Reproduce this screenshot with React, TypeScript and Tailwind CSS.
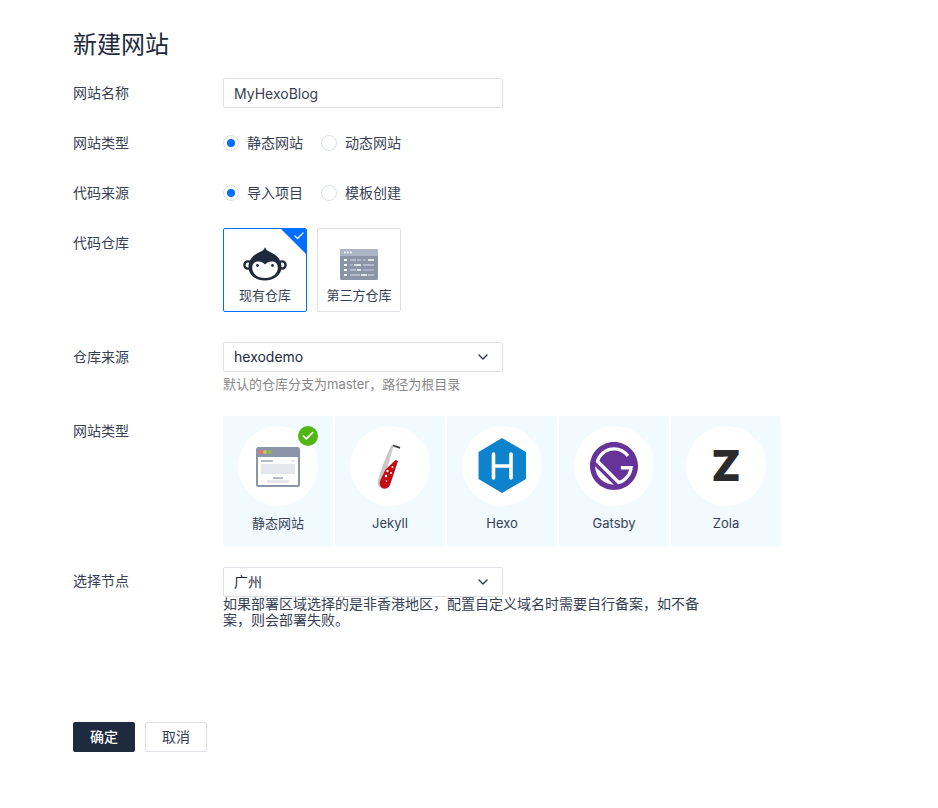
import { ChevronDown, Check } from "lucide-react";
import type { ReactNode } from "react";

function Row({ label, children, className = "", labelClass = "leading-[30px]" }: { label: string; children: ReactNode; className?: string; labelClass?: string }) {
  return (
    <div className={`flex ${className}`}>
      <div className={`w-[150px] shrink-0 text-[14px] text-[#364154] ${labelClass}`}>{label}</div>
      <div className="min-w-0 flex-1">{children}</div>
    </div>
  );
}

function Radio({ text, on }: { text: string; on?: boolean }) {
  return (
    <div className="mr-[18px] flex items-center">
      <span className="flex h-4 w-4 items-center justify-center rounded-full border border-[#d9dee8] bg-white">
        {on && <span className="h-2 w-2 rounded-full bg-[#006eff]" />}
      </span>
      <span className="ml-2 pb-[2px] text-[14px] text-[#364154]">{text}</span>
    </div>
  );
}

function Select({ value }: { value: string }) {
  return (
    <div className="flex h-[30px] w-[280px] items-center justify-between rounded-[2px] border border-[#dde0e8] pl-[10px] pr-[11px] text-[14px] text-[#1e2a3c]">
      <span className="pb-[2px]">{value}</span>
      <ChevronDown size={16} strokeWidth={2} className="text-[#2b3648]" />
    </div>
  );
}

function Monkey() {
  return (
    <svg width="44" height="34" viewBox="0 0 44 34">
      <circle cx="5" cy="18" r="3.6" fill="#fff" stroke="#1e2a3c" strokeWidth="2.4" />
      <circle cx="39" cy="18" r="3.6" fill="#fff" stroke="#1e2a3c" strokeWidth="2.4" />
      <path d="M22 0 C23 4 26 4 30 6.5 C35.5 9.5 38.5 14.5 38.5 20 C38.5 28 31 33.5 22 33.5 C13 33.5 5.5 28 5.5 20 C5.5 14.5 8.5 9.5 14 6.5 C18 4 21 4 22 0 Z" fill="#1e2a3c" />
      <path d="M22 17.5 C24 15 27 14 30 14.5 C34 15 35.5 19 34.5 23 C33 28.5 27.5 31 22 31 C16.5 31 11 28.5 9.5 23 C8.5 19 10 15 14 14.5 C17 14 20 15 22 17.5 Z" fill="#fff" />
      <circle cx="14.5" cy="18.5" r="1.4" fill="#1e2a3c" />
      <circle cx="29.5" cy="18.5" r="1.4" fill="#1e2a3c" />
    </svg>
  );
}

function Repo() {
  return (
    <svg width="38" height="31" viewBox="0 0 38 31">
      <rect width="38" height="31" rx="1.5" fill="#8b95a8" />
      <path d="M0 7V1.5A1.5 1.5 0 0 1 1.5 0h35A1.5 1.5 0 0 1 38 1.5V7Z" fill="#aab4c5" />
      <rect x="4" y="2.5" width="1.8" height="1.8" fill="#fff" />
      <rect x="7" y="2.5" width="1.8" height="1.8" fill="#fff" />
      <rect x="10" y="2.5" width="1.8" height="1.8" fill="#fff" />
      <rect x="4" y="10" width="3" height="2" fill="#fff" />
      <rect x="4" y="15" width="3" height="2" fill="#fff" />
      <rect x="4" y="20" width="3" height="2" fill="#fff" />
      <rect x="4" y="25" width="3" height="2" fill="#fff" />
      <rect x="10" y="10" width="6" height="2" fill="#b4bccb" />
      <rect x="17" y="10" width="4" height="2" fill="#b4bccb" />
      <rect x="23" y="10" width="3" height="2" fill="#a6afc0" />
      <rect x="28" y="10" width="6" height="2" fill="#dfe3ea" />
      <rect x="10" y="15" width="3" height="2" fill="#a6afc0" />
      <rect x="14" y="15" width="7" height="2" fill="#dfe3ea" />
      <rect x="23" y="15" width="11" height="2" fill="#b4bccb" />
      <rect x="10" y="20" width="6" height="2" fill="#b4bccb" />
      <rect x="17" y="20" width="4" height="2" fill="#dfe3ea" />
      <rect x="23" y="20" width="11" height="2" fill="#a6afc0" />
      <rect x="10" y="25" width="10" height="2" fill="#b4bccb" />
      <rect x="21" y="25" width="6" height="2" fill="#dfe3ea" />
      <rect x="28" y="25" width="6" height="2" fill="#b4bccb" />
    </svg>
  );
}

function StaticIcon() {
  return (
    <svg width="80" height="80" viewBox="0 0 80 80">
      <rect x="18" y="21" width="44" height="40" rx="2.5" fill="#8b95a8" />
      <rect x="20" y="31" width="40" height="28" fill="#fff" />
      <circle cx="22" cy="26" r="2" fill="#f8696b" />
      <circle cx="27" cy="26" r="2" fill="#e9b63f" />
      <circle cx="32" cy="26" r="2" fill="#7fc241" />
      <rect x="23" y="34" width="12" height="2" fill="#b2bccb" />
      <rect x="53" y="34" width="4" height="2" fill="#e5e8ec" />
      <rect x="23" y="38" width="34" height="10" fill="#e5e8ec" />
      <rect x="35" y="51" width="10" height="2" fill="#b2bccb" />
      <rect x="29" y="54" width="22" height="3" fill="#e5e8ec" />
    </svg>
  );
}

function JekyllIcon() {
  return (
    <svg width="80" height="80" viewBox="0 0 80 80">
      <path d="M41.5 19 L43.5 20 L33 58 C32.5 60.5 33 61.5 34.5 62.8 C31 63.5 27 60 27.8 55 C31 43 36 30 41.5 19 Z" fill="#c9c9c9" />
      <path d="M45.5 34 L48 35 L40 59 C38 63 34 63.5 31.5 61.5 C29.8 60 29.3 57.5 30 55 L35.5 43.5 Z" fill="#c40d14" />
      <circle cx="42.5" cy="41" r="1" fill="#fff" />
      <circle cx="37.5" cy="45" r="1.2" fill="#fff" />
      <circle cx="41" cy="47" r="1" fill="#fff" />
      <circle cx="36" cy="50" r="1.2" fill="#fff" />
      <circle cx="36.5" cy="55" r="0.8" fill="#fff" />
      <line x1="43" y1="19.5" x2="50" y2="21.8" stroke="#333" strokeWidth="1.8" />
    </svg>
  );
}

function HexoIcon() {
  return (
    <svg width="80" height="80" viewBox="0 0 80 80">
      <polygon points="40,12 64,26 64,53 40,67 16.5,53 16.5,26" fill="#0e83cd" />
      <path d="M31.5 28V52M49 28V52M31.5 40H49" stroke="#fff" strokeWidth="3.6" strokeLinecap="round" fill="none" />
    </svg>
  );
}

function GatsbyIcon() {
  return (
    <svg width="48" height="48" viewBox="0 0 28 28">
      <path
        fill="#663399"
        d="M14 0C6.3 0 0 6.3 0 14s6.3 14 14 14 14-6.3 14-14S21.7 0 14 0zM6.2 21.8C4.1 19.7 3 16.9 3 14.2L13.9 25c-2.8-.1-5.6-1.1-7.7-3.2zm10.2 2.9L3.3 11.6C4.4 6.7 8.8 3 14 3c3.7 0 6.9 1.8 8.9 4.5l-1.5 1.3C19.7 6.5 17 5 14 5c-3.9 0-7.2 2.5-8.5 6L17 22.5c2.9-1 5.1-3.5 5.8-6.5H18v-2h7c0 5.2-3.7 9.6-8.6 10.7z"
      />
    </svg>
  );
}

function Tile({ label, children, badge }: { label: string; children: ReactNode; badge?: boolean }) {
  return (
    <div className="relative flex h-[130px] w-[110px] flex-col items-center rounded-[2px] bg-[#f0faff] pt-[10px]">
      <div className="flex h-20 w-20 items-center justify-center rounded-full bg-white">{children}</div>
      <div className="mt-[7px] text-[13px] leading-5 text-[#364154]">{label}</div>
      {badge && (
        <span className="absolute left-[75px] top-[10px] flex h-5 w-5 items-center justify-center rounded-full bg-[#52b614]">
          <Check size={14} strokeWidth={3} className="text-white" />
        </span>
      )}
    </div>
  );
}

export default function App() {
  return (
    <div className="min-h-[808px] bg-white pl-[73px] pt-[29px] font-['Inter','Noto_Sans_CJK_SC',sans-serif]">
      <h1 className="mb-[17px] text-[24px] font-normal leading-8 text-[#1e2a3c]">新建网站</h1>

      <Row label="网站名称" labelClass="leading-[29px]">
        <div className="flex h-[30px] w-[280px] items-center rounded-[2px] border border-[#dde0e8] pl-[10px] text-[14px] text-[#364154]">
          MyHexoBlog
        </div>
      </Row>

      <Row label="网站类型" className="mt-5">
        <div className="flex h-[30px] items-center">
          <Radio text="静态网站" on />
          <Radio text="动态网站" />
        </div>
      </Row>

      <Row label="代码来源" className="mt-5">
        <div className="flex h-[30px] items-center">
          <Radio text="导入项目" on />
          <Radio text="模板创建" />
        </div>
      </Row>

      <Row label="代码仓库" className="mt-5">
        <div className="flex gap-[10px]">
          <div className="relative flex h-[84px] w-[84px] flex-col items-center overflow-hidden rounded-[2px] border border-[#006eff] pt-[18px]">
            <Monkey />
            <div className="mt-[4px] text-[13px] leading-5 text-[#364154]">现有仓库</div>
            <span className="absolute right-0 top-0 h-0 w-0 border-l-[25px] border-t-[25px] border-l-transparent border-t-[#006eff]" />
            <Check size={12} strokeWidth={2.5} className="absolute right-[1px] top-[1px] text-white" />
          </div>
          <div className="flex h-[84px] w-[84px] flex-col items-center rounded-[2px] border border-[#dde0e8] pt-[18px]">
            <div className="flex h-[34px] items-center">
              <Repo />
            </div>
            <div className="mt-[4px] whitespace-nowrap text-[13px] leading-5 text-[#364154]">第三方仓库</div>
          </div>
        </div>
      </Row>

      <Row label="仓库来源" className="mt-[30px]">
        <Select value="hexodemo" />
        <div className="mt-[2px] text-[13px] leading-5 text-[#888888]">默认的仓库分支为master，路径为根目录</div>
      </Row>

      <Row label="网站类型" className="mt-[22px]">
        <div className="flex gap-[2px]">
          <Tile label="静态网站" badge>
            <StaticIcon />
          </Tile>
          <Tile label="Jekyll">
            <JekyllIcon />
          </Tile>
          <Tile label="Hexo">
            <HexoIcon />
          </Tile>
          <Tile label="Gatsby">
            <GatsbyIcon />
          </Tile>
          <Tile label="Zola">
            <span className="text-[42px] font-black leading-none text-[#2b2b2b]">Z</span>
          </Tile>
        </div>
      </Row>

      <Row label="选择节点" className="mt-[21px]" labelClass="leading-[28px]">
        <Select value="广州" />
        <div className="w-[490px] pb-px text-[14px] leading-4 text-[#364154] -mt-px">
          如果部署区域选择的是非香港地区，配置自定义域名时需要自行备案，如不备案，则会部署失败。
        </div>
      </Row>

      <div className="mt-[93px] flex gap-[10px]">
        <button className="h-[30px] w-[62px] rounded-[2px] bg-[#1e2a3e] pb-[2px] text-[14px] font-medium text-white">确定</button>
        <button className="h-[30px] w-[62px] rounded-[2px] border border-[#dde0e8] bg-white pb-[2px] text-[14px] text-[#364154]">取消</button>
      </div>
    </div>
  );
}
